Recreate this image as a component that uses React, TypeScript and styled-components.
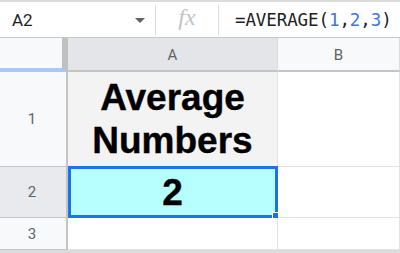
import styled, { createGlobalStyle } from "styled-components";

const GlobalStyle = createGlobalStyle`
  html, body {
    margin: 0;
    padding: 0;
    background: #ffffff;
    overflow: hidden;
  }
  body {
    font-family: Roboto, "Liberation Sans", Arial, sans-serif;
  }
`;

export default function App() {
  return (
    <>
      <GlobalStyle />
      <Screen>
        <FormulaBar>
          <NameBox>
            <NameText>A2</NameText>
            <Caret />
          </NameBox>
          <Divider />
          <FxLabel>fx</FxLabel>
          <Divider />
          <Formula>
            =AVERAGE(<Arg>1</Arg>,<Arg>2</Arg>,<Arg>3</Arg>)
          </Formula>
        </FormulaBar>
        <Grid>
          <Corner />
          <ColHeader $selected>A</ColHeader>
          <ColHeader>B</ColHeader>

          <RowHeader>1</RowHeader>
          <Cell $bg="#f3f3f3">
            <BigText>
              Average
              <br />
              Numbers
            </BigText>
          </Cell>
          <Cell />

          <RowHeader $selected>2</RowHeader>
          <Cell $bg="#b7ffff">
            <BigText>2</BigText>
            <Selection>
              <FillHandle />
            </Selection>
          </Cell>
          <Cell />

          <RowHeader>3</RowHeader>
          <Cell />
          <Cell />
        </Grid>
        <BottomEdge />
      </Screen>
    </>
  );
}

const Screen = styled.div`
  width: 400px;
  height: 253px;
  display: flex;
  flex-direction: column;
  overflow: hidden;
`;

const FormulaBar = styled.div`
  height: 35px;
  display: flex;
  align-items: center;
  border-top: 2px solid #dcdcdc;
  border-bottom: 1px solid #c7c7c7;
  background: #ffffff;
`;

const NameBox = styled.div`
  width: 155px;
  display: flex;
  align-items: center;
  justify-content: space-between;
  padding: 0 10px 0 12px;
  box-sizing: border-box;
`;

const NameText = styled.span`
  font-size: 17px;
  color: #202124;
`;

const Caret = styled.span`
  width: 0;
  height: 0;
  margin-top: 2px;
  border-left: 5px solid transparent;
  border-right: 5px solid transparent;
  border-top: 5px solid #5f6368;
`;

const Divider = styled.span`
  width: 1px;
  height: 30px;
  background: #dadce0;
`;

const FxLabel = styled.span`
  width: 62px;
  text-align: center;
  font-family: "Liberation Serif", "DejaVu Serif", serif;
  font-style: italic;
  font-size: 24px;
  color: #c4c4c4;
  margin-top: -4px;
`;

const Formula = styled.span`
  padding-left: 16px;
  font-family: "DejaVu Sans Mono", "Liberation Mono", monospace;
  font-size: 17.5px;
  letter-spacing: -0.1px;
  color: #202124;
  white-space: nowrap;
`;

const Arg = styled.span`
  color: #3c78d8;
`;

const Grid = styled.div`
  display: grid;
  grid-template-columns: 68px 210px 1fr;
  grid-template-rows: 34px 95px 51px 32px;
`;

const Corner = styled.div`
  background: #f8f9fa;
  border-right: 6px solid #c0c0c0;
  border-bottom: 4px solid #a8c7fa;
  box-sizing: border-box;
`;

const ColHeader = styled.div<{ $selected?: boolean }>`
  display: flex;
  align-items: center;
  justify-content: center;
  background: ${(p) => (p.$selected ? "#e3e5e8" : "#f8f9fa")};
  border-right: 1px solid #dcdcdc;
  border-bottom: 2px solid #c4c4c4;
  box-sizing: border-box;
  font-size: 15px;
  color: #5f6368;
  padding-top: 1px;
`;

const RowHeader = styled.div<{ $selected?: boolean }>`
  display: flex;
  align-items: center;
  justify-content: center;
  background: ${(p) => (p.$selected ? "#e8eaed" : "#f8f9fa")};
  border-right: 2px solid #c4c4c4;
  border-bottom: 1px solid #c4c4c4;
  box-sizing: border-box;
  font-size: 15px;
  color: #5f6368;
  padding-right: 2px;
`;

const Cell = styled.div<{ $bg?: string }>`
  position: relative;
  display: flex;
  align-items: center;
  justify-content: center;
  background: ${(p) => p.$bg ?? "#ffffff"};
  border-right: 1px solid #e2e2e2;
  border-bottom: 1px solid #e2e2e2;
  box-sizing: border-box;
`;

const BigText = styled.div`
  font-family: "Liberation Sans", Arial, sans-serif;
  font-weight: 700;
  font-size: 37px;
  line-height: 43px;
  color: #000000;
  text-align: center;
  -webkit-text-stroke: 0.4px #000000;
`;

const Selection = styled.div`
  position: absolute;
  left: 0;
  top: -1px;
  right: -1px;
  bottom: -1px;
  border: 3px solid #1a73e8;
  pointer-events: none;
`;

const FillHandle = styled.span`
  position: absolute;
  right: -7px;
  bottom: -7px;
  width: 8px;
  height: 8px;
  background: #1a73e8;
  border: 1px solid #ffffff;
`;

const BottomEdge = styled.div`
  height: 3px;
  background: #dcdcdc;
`;
